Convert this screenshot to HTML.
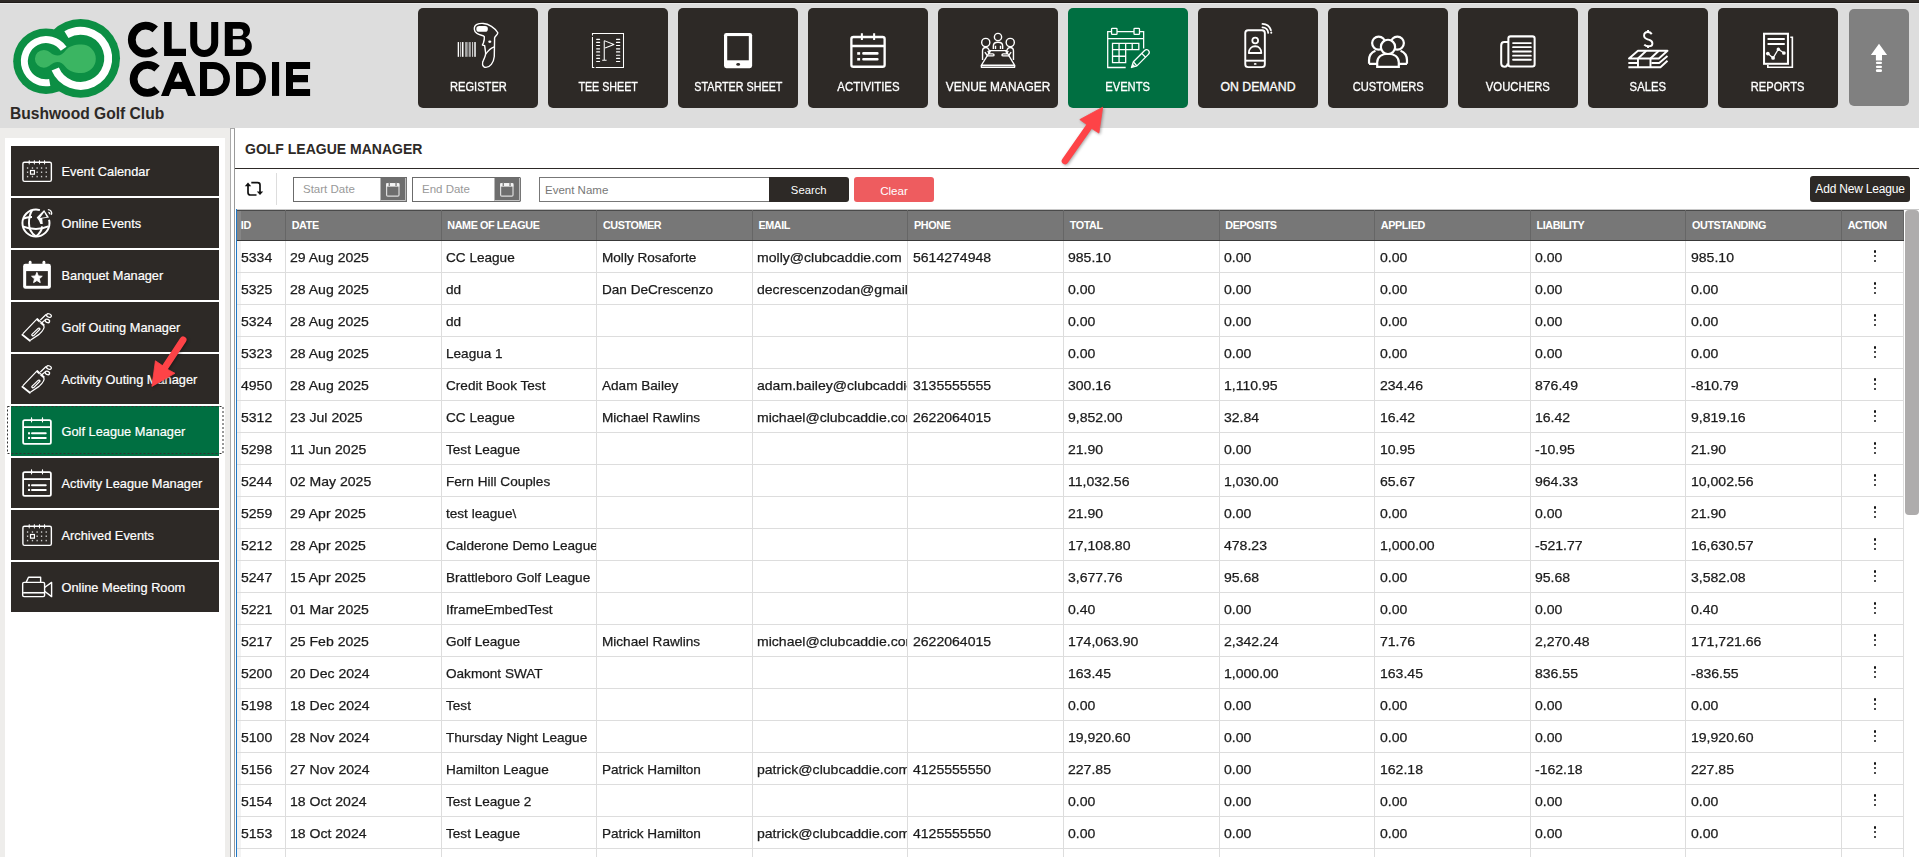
<!DOCTYPE html>
<html>
<head>
<meta charset="utf-8">
<style>
*{box-sizing:border-box;}
html,body{margin:0;padding:0;}
body{width:1919px;height:857px;overflow:hidden;position:relative;background:#fff;font-family:"Liberation Sans",sans-serif;color:#222;}
.abs{position:absolute;}
#hdr{position:absolute;left:0;top:0;width:1919px;height:128px;background:linear-gradient(#2d2926 0,#2d2926 2px,#1f1b19 2px,#1f1b19 3px,#e9e9e9 3px,#e9e9e9 4px,#dddddd 4px);}
#logo{position:absolute;left:0;top:0;}
.brand{position:absolute;font-weight:bold;color:#000;white-space:nowrap;line-height:1;}
#club{left:10px;top:106px;font-size:15.6px;color:#2d2926;font-weight:bold;position:absolute;white-space:nowrap;line-height:15px;}
.nb{position:absolute;top:8px;width:120px;height:100px;background:#2d2926;border-radius:5px;color:#fff;}
.nb.on{background:#006f41;}
.nb .lbl{position:absolute;left:0;right:0;top:71.5px;text-align:center;font-size:12.3px;-webkit-text-stroke:0.3px #fff;line-height:14px;white-space:nowrap;}
.nb svg{position:absolute;left:0;top:0;}
.nb .lbl span{display:inline-block;transform:scaleX(0.905);}
#up{position:absolute;left:1849px;top:9px;width:60px;height:97px;background:#808080;border-radius:5px;}
#side{position:absolute;left:0;top:128px;width:230px;height:729px;background:#eeedeb;}
#sidepanel{position:absolute;left:5px;top:138px;width:220px;height:719px;background:#fff;}
.si{position:absolute;left:11px;width:208px;height:50px;background:#2d2926;color:#fff;font-size:12.8px;line-height:50px;}
.si .t{position:absolute;left:50.5px;top:1px;-webkit-text-stroke:0.2px #fff;white-space:nowrap;}
.si.on{background:#006f41;}
.si svg{position:absolute;left:0;top:0;}
#focus{position:absolute;left:7px;top:406px;width:216px;height:48px;border:1px dashed #444;}
#split{position:absolute;left:230px;top:128px;width:5px;height:729px;background:#fff;border-left:1px solid #aaa;border-right:1px solid #9a9a9a;border-top:1px solid #aaa;}
#main{position:absolute;left:235px;top:128px;width:1683px;height:729px;background:#fff;}
#title{position:absolute;left:245px;top:141px;font-size:14px;font-weight:bold;color:#2d2926;line-height:16px;white-space:nowrap;}
#tline{position:absolute;left:235px;top:168px;width:1684px;height:1px;background:#2d2926;}
#refresh{position:absolute;left:244px;top:180px;}
#sep{position:absolute;left:276px;top:173px;width:1px;height:32px;background:#ddd;}
.din{position:absolute;top:177px;height:25px;border:1.5px solid #6b6b6b;background:#fff;}
.din .ph{position:absolute;left:9px;top:4px;font-size:11.5px;color:#999;line-height:14px;white-space:nowrap;}
.din .cb{position:absolute;right:0;top:0;width:26px;height:21px;background:#777;}
#ename{position:absolute;left:539px;top:177px;width:231px;height:25px;border:1px solid #777;background:#fff;}
#ename .ph{position:absolute;left:5px;top:5px;font-size:11.5px;color:#777;line-height:14px;}
#search{position:absolute;left:768.5px;top:177px;width:80.5px;height:25px;background:#2d2926;color:#fff;border-radius:0 3px 3px 0;font-size:11.3px;text-align:center;line-height:27px;}
#clear{position:absolute;left:854px;top:177px;width:80px;height:25px;background:#ee5c5f;color:#fff;border-radius:3px;font-size:11.6px;text-align:center;line-height:27px;}
#addnew{position:absolute;left:1810px;top:176px;width:100px;height:26px;background:#2d2926;color:#fff;border-radius:3px;font-size:12px;text-align:center;line-height:26px;white-space:nowrap;letter-spacing:-0.2px;}
#tblwrap{position:absolute;left:237px;top:210px;width:1667px;height:648px;overflow:hidden;}
#bluebar{position:absolute;left:236px;top:209px;width:1px;height:648px;background:#1f78c8;}
table{border-collapse:collapse;table-layout:fixed;width:1666.5px;}
th{background:#777;color:#fff;font-size:10.8px;letter-spacing:-0.4px;font-weight:bold;text-align:left;height:30px;padding:0 0 1px 5.6px;border-top:1px solid #4a4a4a;border-bottom:1px solid #383838;border-right:1px solid #666;white-space:nowrap;overflow:hidden;}
td{height:32px;font-size:13.2px;padding:2px 0 0 4.3px;border-bottom:1px solid #ddd;border-right:1px solid #ddd;white-space:nowrap;overflow:hidden;color:#1b1b1b;}
td.act{padding:0;position:relative;}
td span.s{display:inline-block;transform:scaleX(1.065);transform-origin:0 50%;-webkit-text-stroke:0.25px #1b1b1b;}
td span.s.n{transform:scaleX(1.03);}
td:first-child{padding-left:3.5px;background:linear-gradient(90deg,#f3f3f3 0,#f3f3f3 4px,#fff 4px);}
th:first-child{padding-left:3.8px;background:linear-gradient(90deg,#858585 0,#858585 4px,#777 4px);}
.dots{position:absolute;left:31.7px;top:9.4px;width:2.2px;height:12px;}
.dots i{position:absolute;left:0;width:2.2px;height:2.2px;background:#111;border-radius:50%;}
.dots i:nth-child(1){top:0}.dots i:nth-child(2){top:4.8px}.dots i:nth-child(3){top:9.6px}
#sbar{position:absolute;left:1905px;top:210px;width:14px;height:305px;background:#aeacac;border-radius:4px;}
#hl209{position:absolute;left:237px;top:209px;width:1682px;height:1px;background:#c8c8c8;}
</style>
</head>
<body>
<div id="hdr"></div>
<svg id="logo" width="320" height="104" viewBox="0 0 320 104" style="position:absolute;left:0;top:0">
<circle cx="46" cy="61.2" r="32.8" fill="#0c8f44"/>
<circle cx="80.6" cy="58.3" r="39.4" fill="#0c8f44"/>
<path d="M66.41,34.69 A27.55,27.55 0 1 1 55.24,69.06" fill="none" stroke="#fff" stroke-width="7.9"/>
<path d="M49.75,82.47 A21.6,21.6 0 1 1 63.69,48.81" fill="none" stroke="#fff" stroke-width="7"/>
<path d="M43.8,49.9 C48,49.9 50.5,53 54,54.8 C58,56.6 62,55.5 66,50 C69,46.5 74,44.6 81.6,44.6 A14.2,14.2 0 0 1 81.6,73 C74,73 69,71 66,67.5 C62,62 58,61 54,62.8 C50.5,64.6 48,67.7 43.8,67.7 A8.9,8.9 0 0 1 43.8,49.9 Z" fill="#3bb562"/>
<path d="M155.26,49.85 A13.95,13.95 0 1 1 155.26,29.45" fill="none" stroke="#000" stroke-width="7.8"/>
<path d="M164.1,22.1 H171.7 V48.8 H186 V56 H164.1 Z" fill="#000"/>
<path d="M193.7,22.1 V43 A10.5,10.5 0 0 0 214.7,43 V22.1" fill="none" stroke="#000" stroke-width="7"/>
<path fill="#000" fill-rule="evenodd" d="M224.8,22.1 H240 C246,22.1 250,25.5 250,30.5 C250,34 248,36.5 245.5,37.8 C249.5,39 251.8,42 251.8,46.5 C251.8,52.5 247.5,56 240.5,56 H224.8 Z M232.8,28.7 H239.5 C242,28.7 243.3,30.2 243.3,32.3 C243.3,34.5 242,36 239.5,36 H232.8 Z M232.8,39.2 H240.5 C243.7,39.2 245.3,41.3 245.3,44.4 C245.3,47.6 243.7,49.7 240.5,49.7 H232.8 Z"/>
<path d="M157.06,89.10 A13.95,13.95 0 1 1 157.06,68.70" fill="none" stroke="#000" stroke-width="7.8"/>
<path fill="#000" fill-rule="evenodd" d="M161,95.9 L174.6,62 H182 L195.8,95.9 H188 L185.3,89 H171.5 L168.8,95.9 Z M178.2,72.6 L182,81.7 H174.1 Z"/>
<path fill="#000" fill-rule="evenodd" d="M200,62 H213 A16.95,16.95 0 0 1 213,95.9 H200 Z M207.1,69 H213.5 A10,10 0 0 1 213.5,89 H207.1 Z"/>
<path fill="#000" fill-rule="evenodd" d="M236,62 H249 A16.95,16.95 0 0 1 249,95.9 H236 Z M243.1,69 H249.5 A10,10 0 0 1 249.5,89 H243.1 Z"/>
<rect x="272" y="62" width="7.1" height="33.9" fill="#000"/>
<path fill="#000" d="M286,62 H310.1 V69.1 H293 V75.1 H308 V82.2 H293 V89 H310.1 V95.9 H286 Z"/>
</svg>
<div id="club">Bushwood Golf Club</div>

<!-- nav buttons -->
<div class="nb" style="left:418px"><svg width="120" height="100" viewBox="0 0 120 100"><g transform="translate(32,10) scale(0.06417)">
<rect x="120" y="375" width="20" height="230" fill="#fff"/>
<rect x="155" y="375" width="15" height="230" fill="#bbb"/>
<rect x="185" y="375" width="25" height="230" fill="#fff"/>
<rect x="235" y="375" width="40" height="230" fill="#aaa"/>
<rect x="290" y="375" width="35" height="230" fill="#aaa"/>
<rect x="345" y="375" width="15" height="230" fill="#ddd"/>
<rect x="375" y="375" width="30" height="230" fill="#ccc"/>
<path d="M380,180 C370,100 450,80 520,85 C600,90 700,150 745,230 C745,260 700,280 695,310 L690,600 C680,700 620,770 560,770 C500,770 495,700 520,660 C540,620 560,580 555,540 L540,430 L505,420 L520,390 C530,360 540,330 535,290 C520,270 470,270 420,240 C390,220 380,200 380,180 Z" fill="none" stroke="#fff" stroke-width="22" stroke-linejoin="round"/>
<path d="M555,565 C590,515 640,465 690,450" fill="none" stroke="#fff" stroke-width="20"/>
<rect x="410" y="125" width="180" height="90" rx="45" fill="#fff"/>
<ellipse cx="620" cy="370" rx="25" ry="18" fill="#fff"/>
</g></svg><div class="lbl"><span style="transform:scaleX(0.905)">REGISTER</span></div></div>
<div class="nb" style="left:548px"><svg width="120" height="100" viewBox="0 0 120 100"><g transform="translate(37,17) scale(0.05834)">
<g fill="none" stroke="#fff" stroke-width="18">
<path d="M128,180 V145 H660 V728 H185"/>
<path d="M128,205 V728 H160"/>
<g stroke-linecap="round" stroke-width="20"><path d="M200,245 H250 M540,245 H595"/><path d="M200,298 H250 M540,298 H595"/><path d="M200,352 H250 M540,352 H595"/><path d="M200,408 H250 M540,408 H595"/><path d="M200,462 H250 M540,462 H595"/><path d="M200,518 H250 M540,518 H595"/><path d="M200,572 H250 M540,572 H595"/><path d="M200,625 H250 M540,625 H595"/></g>
<path d="M330,270 V605 M295,605 H370"/>
<path d="M330,268 L495,335 L345,395" stroke-linejoin="round"/>
</g></g></svg><div class="lbl"><span style="transform:scaleX(0.87)">TEE SHEET</span></div></div>
<div class="nb" style="left:678px"><svg width="120" height="100" viewBox="0 0 120 100"><g transform="translate(32,17) scale(0.05834)">
<rect x="240" y="135" width="482" height="605" rx="40" fill="#fff"/>
<rect x="295" y="190" width="370" height="415" fill="#2d2926"/>
<ellipse cx="483" cy="675" rx="33" ry="24" fill="#2d2926"/>
</g></svg><div class="lbl"><span style="transform:scaleX(0.875)">STARTER SHEET</span></div></div>
<div class="nb" style="left:808px"><svg width="120" height="100" viewBox="0 0 120 100"><g transform="translate(32,17) scale(0.05834)">
<g fill="none" stroke="#fff">
<rect x="195" y="205" width="570" height="510" rx="35" stroke-width="40"/>
<path d="M195,360 H765" stroke-width="40"/>
<path d="M375,140 V255 M585,140 V255" stroke-width="35"/>
<path d="M402,487 H640 M402,587 H640" stroke-width="45" stroke-linecap="round"/>
</g>
<rect x="295" y="465" width="50" height="45" fill="#fff"/>
<rect x="295" y="565" width="50" height="45" fill="#fff"/>
</g></svg><div class="lbl"><span style="transform:scaleX(0.93)">ACTIVITIES</span></div></div>
<div class="nb" style="left:938px"><svg width="120" height="100" viewBox="0 0 120 100"><g transform="translate(32,17) scale(0.05834)">
<g fill="none" stroke="#fff" stroke-width="24" stroke-linejoin="round">
<circle cx="480" cy="205" r="62"/>
<circle cx="270" cy="300" r="70"/>
<circle cx="690" cy="300" r="70"/>
<path d="M400,410 V360 C400,320 430,295 480,295 C530,295 560,320 560,360 V410"/>
<path d="M437,355 V410 M523,355 V410"/>
<path d="M350,440 H615 L765,690 H195 Z"/>
<path d="M195,690 V725 H765 V690"/>
<path d="M215,600 V440 C215,405 240,385 275,385 C300,385 315,400 325,425 L345,470"/>
<path d="M255,465 L300,530 H390 C420,530 420,495 390,495 H335 L305,445"/><path d="M745,600 V440 C745,405 720,385 685,385 C660,385 645,400 635,425 L615,470"/>
<path d="M705,465 L660,530 H570 C540,530 540,495 570,495 H625 L655,445"/>
</g></g></svg><div class="lbl"><span style="transform:scaleX(0.968)">VENUE MANAGER</span></div></div>
<div class="nb on" style="left:1068px"><svg width="120" height="100" viewBox="0 0 120 100"><g transform="translate(32,12) scale(0.06418)">
<g fill="none" stroke="#fff" stroke-width="20">
<path d="M400,740 H120 V180 H680 V445"/>
<path d="M120,290 H680"/>
<rect x="180" y="130" width="85" height="95" rx="12" fill="#006f41"/>
<rect x="530" y="130" width="85" height="95" rx="12" fill="#006f41"/>
<path d="M195,365 H605 V460 H195 Z M297,365 V665 M400,365 V460 M502,365 V460 M195,460 V665 H400 V460 M195,565 H400"/>
<path d="M490,740 L520,650 L695,475 C715,455 745,460 760,480 C775,500 770,520 750,540 L575,715 Z" stroke-linejoin="round"/>
<path d="M520,650 L575,715 M650,520 L710,580"/>
</g>
<path d="M490,740 L510,680 L550,720 Z" fill="#fff"/>
</g></svg><div class="lbl"><span style="transform:scaleX(0.905)">EVENTS</span></div></div>
<div class="nb" style="left:1198px"><svg width="120" height="100" viewBox="0 0 120 100"><g transform="translate(37,10) scale(0.06418)">
<g fill="none" stroke="#fff" stroke-width="30">
<rect x="160" y="190" width="305" height="575" rx="45"/>
<path d="M160,665 H465"/>
<circle cx="315" cy="350" r="45" stroke-width="28"/>
<path d="M215,545 C215,480 260,440 315,440 C370,440 410,480 410,545 Z" stroke-width="28" stroke-linejoin="round"/>
<path d="M428,145 A90,90 0 0 1 518,232" stroke-linecap="round" stroke-width="28"/>
<path d="M428,92 A142,142 0 0 1 560,190" stroke-linecap="round" stroke-width="28"/>
</g>
<ellipse cx="315" cy="715" rx="22" ry="14" fill="#fff"/>
<circle cx="565" cy="228" r="16" fill="#fff"/>
</g></svg><div class="lbl"><span style="transform:scaleX(1.0)">ON DEMAND</span></div></div>
<div class="nb" style="left:1328px"><svg width="120" height="100" viewBox="0 0 120 100"><g transform="translate(32,17) scale(0.05834)">
<g fill="none" stroke="#fff" stroke-width="38">
<circle cx="320" cy="310" r="112"/>
<circle cx="640" cy="310" r="112"/>
<path d="M155,665 V600 C155,520 200,465 265,440 M155,665 H300"/>
<path d="M805,665 V600 C805,520 760,465 695,440 M805,665 H660"/>
<path d="M295,717 V640 C295,550 370,490 480,490 C590,490 665,550 665,640 V717 Z" fill="#2d2926"/>
<circle cx="480" cy="375" r="122" fill="#2d2926"/>
</g></g></svg><div class="lbl"><span style="transform:scaleX(0.905)">CUSTOMERS</span></div></div>
<div class="nb" style="left:1458px"><svg width="120" height="100" viewBox="0 0 120 100"><g transform="translate(32,17) scale(0.05834)">
<g fill="none" stroke="#fff" stroke-width="35">
<rect x="315" y="195" width="450" height="515" rx="38"/>
<path d="M315,292 H245 C210,292 192,315 192,350 V655 C192,695 220,715 255,715 C290,715 300,690 305,660"/>
<path d="M395,310 H700 M395,380 H700 M395,455 H700 M395,525 H700 M395,595 H700 " stroke-width="32" stroke-linecap="round"/>
</g></g></svg><div class="lbl"><span style="transform:scaleX(0.92)">VOUCHERS</span></div></div>
<div class="nb" style="left:1588px"><svg width="120" height="100" viewBox="0 0 120 100"><g transform="translate(32,12) scale(0.06418)">
<g fill="none" stroke="#fff" stroke-width="30">
<path d="M495,220 C480,198 460,188 435,188 C398,188 375,212 375,245 C375,288 420,298 447,307 C482,318 505,333 505,365 C505,396 480,410 445,410 C415,410 393,400 378,382"/>
<path d="M437,155 V195 M437,405 V435"/>
<path d="M140,600 L280,480 H740 L605,600 Z" stroke-linejoin="round"/>
<path d="M280,600 L410,480 M475,600 L605,480"/>
<path d="M130,670 H265 M490,670 H610 L740,560 M130,735 H630 L740,635"/>
<path d="M280,600 V735 M475,600 V735"/>
</g></g></svg><div class="lbl"><span style="transform:scaleX(0.92)">SALES</span></div></div>
<div class="nb" style="left:1718px"><svg width="120" height="100" viewBox="0 0 120 100"><g transform="translate(37,17) scale(0.05834)">
<g fill="none" stroke="#fff">
<rect x="155" y="150" width="410" height="515" stroke-width="35"/>
<path d="M605,210 H640 V725 H220 V685" stroke-width="28"/>
<path d="M215,240 H510 M215,325 H510" stroke-width="35"/>
<path d="M220,490 L310,565 L400,415 L495,480" stroke-width="22"/>
</g>
<g fill="#fff"><circle cx="220" cy="490" r="32"/><circle cx="310" cy="565" r="32"/><circle cx="400" cy="415" r="30"/><circle cx="495" cy="480" r="32"/></g>
</g></svg><div class="lbl"><span style="transform:scaleX(0.905)">REPORTS</span></div></div>
<div id="up"><svg width="60" height="97" viewBox="0 0 60 97" style="position:absolute;left:0;top:0">
<path d="M30,34.8 L38.1,46 H33 V51.6 H26.9 V46 H21.9 Z" fill="#fff"/>
<rect x="26.9" y="52.8" width="6.1" height="2.3" rx="1.1" fill="#fff"/>
<rect x="26.9" y="56.8" width="6.1" height="2.3" rx="1.1" fill="#fff"/>
<rect x="26.9" y="60.3" width="6.1" height="2.8" rx="1.3" fill="#fff"/>
</svg></div>

<div id="side"></div>
<div id="sidepanel"></div>
<div class="si" style="top:146px"><svg width="50" height="50" viewBox="0 0 50 50"><g transform="translate(7,5) scale(0.046664)"><rect x="105" y="240" width="610" height="410" rx="35" fill="none" stroke="#fff" stroke-width="30"/>
<ellipse cx="240" cy="243" rx="13" ry="50" fill="#fff"/><ellipse cx="350" cy="243" rx="13" ry="50" fill="#fff"/><ellipse cx="460" cy="243" rx="13" ry="50" fill="#fff"/><ellipse cx="570" cy="243" rx="13" ry="50" fill="#fff"/><rect x="191" y="349" width="28" height="32" fill="#ccc"/><rect x="296" y="349" width="28" height="32" fill="#ccc"/><rect x="396" y="349" width="28" height="32" fill="#ccc"/><rect x="491" y="349" width="28" height="32" fill="#ccc"/><rect x="591" y="349" width="28" height="32" fill="#ccc"/><rect x="191" y="439" width="28" height="32" fill="#ccc"/><rect x="396" y="439" width="28" height="32" fill="#ccc"/><rect x="491" y="439" width="28" height="32" fill="#ccc"/><rect x="591" y="439" width="28" height="32" fill="#ccc"/><rect x="191" y="532" width="28" height="32" fill="#ccc"/><rect x="296" y="532" width="28" height="32" fill="#ccc"/><rect x="396" y="532" width="28" height="32" fill="#ccc"/><rect x="491" y="532" width="28" height="32" fill="#ccc"/><rect x="591" y="532" width="28" height="32" fill="#ccc"/><rect x="268" y="418" width="84" height="78" fill="none" stroke="#fff" stroke-width="26"/></g></svg><span class="t">Event Calendar</span></div>
<div class="si" style="top:198px"><svg width="50" height="50" viewBox="0 0 50 50"><g transform="translate(7,5) scale(0.046664)"><g fill="none" stroke="#fff" stroke-width="42">
<path d="M470,152 C430,142 410,140 385,140 C225,140 95,270 95,430 C95,590 225,720 385,720 C545,720 675,590 675,430 C675,400 670,380 665,360"/>
<path d="M300,160 C250,240 235,330 235,430 C235,560 290,660 385,715"/>
<path d="M385,715 C460,660 510,580 515,500"/>
<path d="M115,335 C160,310 230,300 300,300"/>
<path d="M100,500 C200,545 300,555 385,555 C480,555 570,535 650,500"/>
</g>
<path d="M400,310 L560,150 L665,310 L520,330 L530,450 L480,450 L450,380 Z" fill="#fff"/>
<path d="M470,320 L560,200 L615,300 Z" fill="#2d2926"/>
<path d="M640,140 A80,80 0 0 1 715,250 M650,200 A35,35 0 0 1 680,245" fill="none" stroke="#fff" stroke-width="28"/>
</g></svg><span class="t">Online Events</span></div>
<div class="si" style="top:250px"><svg width="50" height="50" viewBox="0 0 50 50"><g transform="translate(7,5) scale(0.046664)"><rect x="110" y="190" width="595" height="535" rx="50" fill="#fff"/>
<rect x="175" y="345" width="465" height="315" fill="#2d2926"/>
<rect x="230" y="125" width="60" height="110" rx="30" fill="#fff"/>
<rect x="525" y="125" width="60" height="110" rx="30" fill="#fff"/>
<path d="M405,372 L437,448 L520,455 L457,510 L477,592 L405,548 L333,592 L353,510 L290,455 L373,448 Z" fill="#fff" stroke="#fff" stroke-width="18" stroke-linejoin="round"/>
</g></svg><span class="t">Banquet Manager</span></div>
<div class="si" style="top:302px"><svg width="50" height="50" viewBox="0 0 50 50"><g transform="translate(9,5) scale(0.03968)"><g fill="none" stroke="#fff" stroke-width="32" stroke-linejoin="round" stroke-linecap="round">
<path d="M80,665 L430,300"/>
<path d="M600,470 C630,530 580,600 480,690 L270,830"/>
<path d="M60,700 L250,850" stroke-width="46"/>
<path d="M300,690 L450,545 C470,525 500,530 505,555 L345,720 C325,738 288,715 300,690 Z"/>
<path d="M520,320 L650,195 M565,385 L625,330"/>
<ellipse cx="730" cy="215" rx="62" ry="42" transform="rotate(25 730 215)"/>
<ellipse cx="690" cy="350" rx="58" ry="40" transform="rotate(25 690 350)"/>
</g>
<path d="M440,280 L625,445 L590,485 L405,320 Z" fill="#fff"/>
<rect x="485" y="370" width="30" height="30" fill="#2d2926" transform="rotate(42 500 385)"/>
</g></svg><span class="t">Golf Outing Manager</span></div>
<div class="si" style="top:354px"><svg width="50" height="50" viewBox="0 0 50 50"><g transform="translate(9,5) scale(0.03968)"><g fill="none" stroke="#fff" stroke-width="32" stroke-linejoin="round" stroke-linecap="round">
<path d="M80,665 L430,300"/>
<path d="M600,470 C630,530 580,600 480,690 L270,830"/>
<path d="M60,700 L250,850" stroke-width="46"/>
<path d="M300,690 L450,545 C470,525 500,530 505,555 L345,720 C325,738 288,715 300,690 Z"/>
<path d="M520,320 L650,195 M565,385 L625,330"/>
<ellipse cx="730" cy="215" rx="62" ry="42" transform="rotate(25 730 215)"/>
<ellipse cx="690" cy="350" rx="58" ry="40" transform="rotate(25 690 350)"/>
</g>
<path d="M440,280 L625,445 L590,485 L405,320 Z" fill="#fff"/>
<rect x="485" y="370" width="30" height="30" fill="#2d2926" transform="rotate(42 500 385)"/>
</g></svg><span class="t">Activity Outing Manager</span></div>
<div class="si on" style="top:406px"><svg width="50" height="50" viewBox="0 0 50 50"><g transform="translate(7,5) scale(0.046664)"><g fill="none" stroke="#fff" stroke-width="38">
<rect x="110" y="195" width="595" height="510" rx="35"/>
<path d="M110,345 H705"/>
<path d="M300,478 H595 M300,578 H595" stroke-width="42" stroke-linecap="round"/>
</g>
<ellipse cx="290" cy="190" rx="15" ry="62" fill="#fff"/>
<ellipse cx="525" cy="190" rx="15" ry="62" fill="#fff"/>
<rect x="215" y="455" width="43" height="45" fill="#fff"/>
<rect x="215" y="555" width="43" height="45" fill="#fff"/></g></svg><span class="t">Golf League Manager</span></div>
<div class="si" style="top:458px"><svg width="50" height="50" viewBox="0 0 50 50"><g transform="translate(7,5) scale(0.046664)"><g fill="none" stroke="#fff" stroke-width="38">
<rect x="110" y="195" width="595" height="510" rx="35"/>
<path d="M110,345 H705"/>
<path d="M300,478 H595 M300,578 H595" stroke-width="42" stroke-linecap="round"/>
</g>
<ellipse cx="290" cy="190" rx="15" ry="62" fill="#fff"/>
<ellipse cx="525" cy="190" rx="15" ry="62" fill="#fff"/>
<rect x="215" y="455" width="43" height="45" fill="#fff"/>
<rect x="215" y="555" width="43" height="45" fill="#fff"/></g></svg><span class="t">Activity League Manager</span></div>
<div class="si" style="top:510px"><svg width="50" height="50" viewBox="0 0 50 50"><g transform="translate(7,5) scale(0.046664)"><rect x="105" y="240" width="610" height="410" rx="35" fill="none" stroke="#fff" stroke-width="30"/>
<ellipse cx="240" cy="243" rx="13" ry="50" fill="#fff"/><ellipse cx="350" cy="243" rx="13" ry="50" fill="#fff"/><ellipse cx="460" cy="243" rx="13" ry="50" fill="#fff"/><ellipse cx="570" cy="243" rx="13" ry="50" fill="#fff"/><rect x="191" y="349" width="28" height="32" fill="#ccc"/><rect x="296" y="349" width="28" height="32" fill="#ccc"/><rect x="396" y="349" width="28" height="32" fill="#ccc"/><rect x="491" y="349" width="28" height="32" fill="#ccc"/><rect x="591" y="349" width="28" height="32" fill="#ccc"/><rect x="191" y="439" width="28" height="32" fill="#ccc"/><rect x="396" y="439" width="28" height="32" fill="#ccc"/><rect x="491" y="439" width="28" height="32" fill="#ccc"/><rect x="591" y="439" width="28" height="32" fill="#ccc"/><rect x="191" y="532" width="28" height="32" fill="#ccc"/><rect x="296" y="532" width="28" height="32" fill="#ccc"/><rect x="396" y="532" width="28" height="32" fill="#ccc"/><rect x="491" y="532" width="28" height="32" fill="#ccc"/><rect x="591" y="532" width="28" height="32" fill="#ccc"/><rect x="268" y="418" width="84" height="78" fill="none" stroke="#fff" stroke-width="26"/></g></svg><span class="t">Archived Events</span></div>
<div class="si" style="top:562px"><svg width="50" height="50" viewBox="0 0 50 50"><g transform="translate(7,5) scale(0.046664)"><g fill="none" stroke="#fff" stroke-width="30" stroke-linejoin="round">
<rect x="100" y="330" width="470" height="305" rx="30"/>
<path d="M175,330 L225,220 H485 V330"/>
<path d="M110,552 H560" stroke-width="34"/>
<path d="M570,440 L720,330 V635 L570,520"/>
</g></g></svg><span class="t">Online Meeting Room</span></div>
<svg style="position:absolute;left:7px;top:406px" width="217" height="49"><rect x="0.5" y="0.5" width="215.5" height="47" fill="none" stroke="#333" stroke-width="1" stroke-dasharray="2,2"/></svg>

<div id="split"></div>
<div id="main"></div>
<div id="title">GOLF LEAGUE MANAGER</div>
<div id="tline"></div>
<svg id="refresh" width="30" height="30" viewBox="240 176 30 30" style="position:absolute;left:240px;top:176px">
<g fill="none" stroke="#111" stroke-width="1.7">
<path d="M248,185.5 V192.5 C248,194 249,195 250.5,195 H256.5"/>
<path d="M251.3,182.6 H257.6 C259,182.6 260,183.6 260,185 V192"/>
</g>
<path d="M248,182.6 L251.2,186.2 H244.8 Z" fill="#111"/>
<path d="M260,195 L263.2,191.6 H256.8 Z" fill="#111"/>
</svg>
<div id="sep"></div>
<div class="din" style="left:293px;width:114px"><span class="ph">Start Date</span></div>
<div class="din" style="left:412px;width:108px"><span class="ph">End Date</span></div>
<svg width="30" height="30" viewBox="0 0 30 30" style="position:absolute;left:380px;top:177px"><rect x="0.5" y="0.5" width="26.5" height="24" fill="#6e6e6e"/>
<path d="M25.6,1 V23.5 H0.5" fill="none" stroke="#cfcfcf" stroke-width="0.9"/>
<rect x="6.6" y="6.6" width="12.4" height="12.6" rx="1.2" fill="none" stroke="#dcdcdc" stroke-width="1.2"/>
<rect x="6.3" y="6.2" width="13" height="3.4" fill="#f4f4f4"/>
<rect x="8.6" y="5" width="1.3" height="4" fill="#7a7a7a"/><rect x="15.4" y="5" width="1.3" height="4" fill="#7a7a7a"/>
</svg><svg width="30" height="30" viewBox="0 0 30 30" style="position:absolute;left:494px;top:177px"><rect x="0.5" y="0.5" width="26.5" height="24" fill="#6e6e6e"/>
<path d="M25.6,1 V23.5 H0.5" fill="none" stroke="#cfcfcf" stroke-width="0.9"/>
<rect x="6.6" y="6.6" width="12.4" height="12.6" rx="1.2" fill="none" stroke="#dcdcdc" stroke-width="1.2"/>
<rect x="6.3" y="6.2" width="13" height="3.4" fill="#f4f4f4"/>
<rect x="8.6" y="5" width="1.3" height="4" fill="#7a7a7a"/><rect x="15.4" y="5" width="1.3" height="4" fill="#7a7a7a"/>
</svg>
<div id="ename"><span class="ph">Event Name</span></div>
<div id="search">Search</div>
<div id="clear">Clear</div>
<div id="addnew">Add New League</div>

<div id="tblwrap">
<table>
<colgroup><col style="width:48.60px"><col style="width:155.60px"><col style="width:155.60px"><col style="width:155.60px"><col style="width:155.60px"><col style="width:155.60px"><col style="width:155.60px"><col style="width:155.60px"><col style="width:155.60px"><col style="width:155.60px"><col style="width:155.60px"><col style="width:61.90px"></colgroup>
<thead><tr><th>ID</th><th>DATE</th><th>NAME OF LEAGUE</th><th>CUSTOMER</th><th>EMAIL</th><th>PHONE</th><th>TOTAL</th><th>DEPOSITS</th><th>APPLIED</th><th>LIABILITY</th><th>OUTSTANDING</th><th>ACTION</th></tr></thead>
<tbody>
<tr><td><span class="s">5334</span></td><td><span class="s">29 Aug 2025</span></td><td><span class="s n">CC League</span></td><td><span class="s n">Molly Rosaforte</span></td><td><span class="s">molly@clubcaddie.com</span></td><td><span class="s">5614274948</span></td><td><span class="s">985.10</span></td><td><span class="s">0.00</span></td><td><span class="s">0.00</span></td><td><span class="s">0.00</span></td><td><span class="s">985.10</span></td><td class="act"><span class="dots"><i></i><i></i><i></i></span></td></tr>
<tr><td><span class="s">5325</span></td><td><span class="s">28 Aug 2025</span></td><td><span class="s n">dd</span></td><td><span class="s n">Dan DeCrescenzo</span></td><td><span class="s">decrescenzodan@gmail.com</span></td><td></td><td><span class="s">0.00</span></td><td><span class="s">0.00</span></td><td><span class="s">0.00</span></td><td><span class="s">0.00</span></td><td><span class="s">0.00</span></td><td class="act"><span class="dots"><i></i><i></i><i></i></span></td></tr>
<tr><td><span class="s">5324</span></td><td><span class="s">28 Aug 2025</span></td><td><span class="s n">dd</span></td><td></td><td></td><td></td><td><span class="s">0.00</span></td><td><span class="s">0.00</span></td><td><span class="s">0.00</span></td><td><span class="s">0.00</span></td><td><span class="s">0.00</span></td><td class="act"><span class="dots"><i></i><i></i><i></i></span></td></tr>
<tr><td><span class="s">5323</span></td><td><span class="s">28 Aug 2025</span></td><td><span class="s n">Leagua 1</span></td><td></td><td></td><td></td><td><span class="s">0.00</span></td><td><span class="s">0.00</span></td><td><span class="s">0.00</span></td><td><span class="s">0.00</span></td><td><span class="s">0.00</span></td><td class="act"><span class="dots"><i></i><i></i><i></i></span></td></tr>
<tr><td><span class="s">4950</span></td><td><span class="s">28 Aug 2025</span></td><td><span class="s n">Credit Book Test</span></td><td><span class="s n">Adam Bailey</span></td><td><span class="s">adam.bailey@clubcaddie.com</span></td><td><span class="s">3135555555</span></td><td><span class="s">300.16</span></td><td><span class="s">1,110.95</span></td><td><span class="s">234.46</span></td><td><span class="s">876.49</span></td><td><span class="s">-810.79</span></td><td class="act"><span class="dots"><i></i><i></i><i></i></span></td></tr>
<tr><td><span class="s">5312</span></td><td><span class="s">23 Jul 2025</span></td><td><span class="s n">CC League</span></td><td><span class="s n">Michael Rawlins</span></td><td><span class="s">michael@clubcaddie.com</span></td><td><span class="s">2622064015</span></td><td><span class="s">9,852.00</span></td><td><span class="s">32.84</span></td><td><span class="s">16.42</span></td><td><span class="s">16.42</span></td><td><span class="s">9,819.16</span></td><td class="act"><span class="dots"><i></i><i></i><i></i></span></td></tr>
<tr><td><span class="s">5298</span></td><td><span class="s">11 Jun 2025</span></td><td><span class="s n">Test League</span></td><td></td><td></td><td></td><td><span class="s">21.90</span></td><td><span class="s">0.00</span></td><td><span class="s">10.95</span></td><td><span class="s">-10.95</span></td><td><span class="s">21.90</span></td><td class="act"><span class="dots"><i></i><i></i><i></i></span></td></tr>
<tr><td><span class="s">5244</span></td><td><span class="s">02 May 2025</span></td><td><span class="s n">Fern Hill Couples</span></td><td></td><td></td><td></td><td><span class="s">11,032.56</span></td><td><span class="s">1,030.00</span></td><td><span class="s">65.67</span></td><td><span class="s">964.33</span></td><td><span class="s">10,002.56</span></td><td class="act"><span class="dots"><i></i><i></i><i></i></span></td></tr>
<tr><td><span class="s">5259</span></td><td><span class="s">29 Apr 2025</span></td><td><span class="s n">test league\</span></td><td></td><td></td><td></td><td><span class="s">21.90</span></td><td><span class="s">0.00</span></td><td><span class="s">0.00</span></td><td><span class="s">0.00</span></td><td><span class="s">21.90</span></td><td class="act"><span class="dots"><i></i><i></i><i></i></span></td></tr>
<tr><td><span class="s">5212</span></td><td><span class="s">28 Apr 2025</span></td><td><span class="s n">Calderone Demo League</span></td><td></td><td></td><td></td><td><span class="s">17,108.80</span></td><td><span class="s">478.23</span></td><td><span class="s">1,000.00</span></td><td><span class="s">-521.77</span></td><td><span class="s">16,630.57</span></td><td class="act"><span class="dots"><i></i><i></i><i></i></span></td></tr>
<tr><td><span class="s">5247</span></td><td><span class="s">15 Apr 2025</span></td><td><span class="s n">Brattleboro Golf League</span></td><td></td><td></td><td></td><td><span class="s">3,677.76</span></td><td><span class="s">95.68</span></td><td><span class="s">0.00</span></td><td><span class="s">95.68</span></td><td><span class="s">3,582.08</span></td><td class="act"><span class="dots"><i></i><i></i><i></i></span></td></tr>
<tr><td><span class="s">5221</span></td><td><span class="s">01 Mar 2025</span></td><td><span class="s n">IframeEmbedTest</span></td><td></td><td></td><td></td><td><span class="s">0.40</span></td><td><span class="s">0.00</span></td><td><span class="s">0.00</span></td><td><span class="s">0.00</span></td><td><span class="s">0.40</span></td><td class="act"><span class="dots"><i></i><i></i><i></i></span></td></tr>
<tr><td><span class="s">5217</span></td><td><span class="s">25 Feb 2025</span></td><td><span class="s n">Golf League</span></td><td><span class="s n">Michael Rawlins</span></td><td><span class="s">michael@clubcaddie.com</span></td><td><span class="s">2622064015</span></td><td><span class="s">174,063.90</span></td><td><span class="s">2,342.24</span></td><td><span class="s">71.76</span></td><td><span class="s">2,270.48</span></td><td><span class="s">171,721.66</span></td><td class="act"><span class="dots"><i></i><i></i><i></i></span></td></tr>
<tr><td><span class="s">5200</span></td><td><span class="s">20 Dec 2024</span></td><td><span class="s n">Oakmont SWAT</span></td><td></td><td></td><td></td><td><span class="s">163.45</span></td><td><span class="s">1,000.00</span></td><td><span class="s">163.45</span></td><td><span class="s">836.55</span></td><td><span class="s">-836.55</span></td><td class="act"><span class="dots"><i></i><i></i><i></i></span></td></tr>
<tr><td><span class="s">5198</span></td><td><span class="s">18 Dec 2024</span></td><td><span class="s n">Test</span></td><td></td><td></td><td></td><td><span class="s">0.00</span></td><td><span class="s">0.00</span></td><td><span class="s">0.00</span></td><td><span class="s">0.00</span></td><td><span class="s">0.00</span></td><td class="act"><span class="dots"><i></i><i></i><i></i></span></td></tr>
<tr><td><span class="s">5100</span></td><td><span class="s">28 Nov 2024</span></td><td><span class="s n">Thursday Night League</span></td><td></td><td></td><td></td><td><span class="s">19,920.60</span></td><td><span class="s">0.00</span></td><td><span class="s">0.00</span></td><td><span class="s">0.00</span></td><td><span class="s">19,920.60</span></td><td class="act"><span class="dots"><i></i><i></i><i></i></span></td></tr>
<tr><td><span class="s">5156</span></td><td><span class="s">27 Nov 2024</span></td><td><span class="s n">Hamilton League</span></td><td><span class="s n">Patrick Hamilton</span></td><td><span class="s">patrick@clubcaddie.com</span></td><td><span class="s">4125555550</span></td><td><span class="s">227.85</span></td><td><span class="s">0.00</span></td><td><span class="s">162.18</span></td><td><span class="s">-162.18</span></td><td><span class="s">227.85</span></td><td class="act"><span class="dots"><i></i><i></i><i></i></span></td></tr>
<tr><td><span class="s">5154</span></td><td><span class="s">18 Oct 2024</span></td><td><span class="s n">Test League 2</span></td><td></td><td></td><td></td><td><span class="s">0.00</span></td><td><span class="s">0.00</span></td><td><span class="s">0.00</span></td><td><span class="s">0.00</span></td><td><span class="s">0.00</span></td><td class="act"><span class="dots"><i></i><i></i><i></i></span></td></tr>
<tr><td><span class="s">5153</span></td><td><span class="s">18 Oct 2024</span></td><td><span class="s n">Test League</span></td><td><span class="s n">Patrick Hamilton</span></td><td><span class="s">patrick@clubcaddie.com</span></td><td><span class="s">4125555550</span></td><td><span class="s">0.00</span></td><td><span class="s">0.00</span></td><td><span class="s">0.00</span></td><td><span class="s">0.00</span></td><td><span class="s">0.00</span></td><td class="act"><span class="dots"><i></i><i></i><i></i></span></td></tr>
<tr><td><span class="s">5150</span></td><td><span class="s">17 Oct 2024</span></td><td></td><td></td><td></td><td></td><td><span class="s">0.00</span></td><td><span class="s">0.00</span></td><td><span class="s">0.00</span></td><td><span class="s">0.00</span></td><td><span class="s">0.00</span></td><td class="act"><span class="dots"><i></i><i></i><i></i></span></td></tr>

</tbody>
</table>
</div>
<div id="bluebar"></div>
<svg width="1919" height="857" style="position:absolute;left:0;top:0;pointer-events:none;filter:drop-shadow(1px 1.5px 1.5px rgba(0,0,0,0.35))">
<g fill="#fe4347" stroke="#fe4347">
<path d="M1065.1,160.9 L1089.2,126.5" stroke-width="6.8" stroke-linecap="round" fill="none"/>
<path d="M1102.7,107.2 L1079.8,119.6 L1086,124 L1092.5,129 L1098.9,133.1 Z" stroke-width="0.8" stroke-linejoin="round"/>
<path d="M183.1,339.8 L165,367.3" stroke-width="6.8" stroke-linecap="round" fill="none"/>
<path d="M151.9,386.4 L155.4,360.8 L161.4,364.8 L168.7,369.9 L175,373.3 Z" stroke-width="0.8" stroke-linejoin="round"/>
</g></svg>
<div id="hl209"></div><div id="sbar"></div>
</body>
</html>
